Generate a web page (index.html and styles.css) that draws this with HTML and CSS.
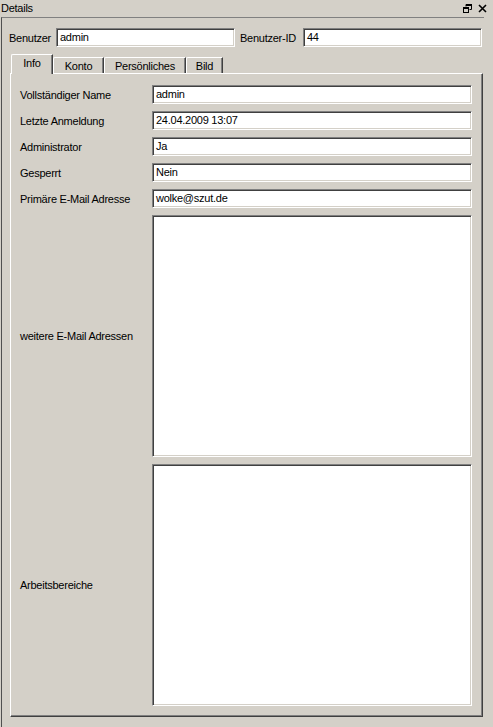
FILE: index.html
```html
<!DOCTYPE html>
<html>
<head>
<meta charset="utf-8">
<link rel="stylesheet" href="styles.css">
</head>
<body>
<div class="titlebar">
  <span class="title">Details</span>
  <span class="icons">
    <svg class="ico" width="9" height="9" viewBox="0 0 9 9">
      <path d="M3 0.5H8.5V5.5H6.5M3 0.5V2.5" fill="none" stroke="#000" stroke-width="1"/>
      <rect x="3" y="0" width="6" height="2" fill="#000"/>
      <rect x="0.5" y="3.5" width="5" height="5" fill="none" stroke="#000" stroke-width="1"/>
      <rect x="0" y="3" width="6" height="2" fill="#000"/>
    </svg>
    <svg class="ico" width="9" height="9" viewBox="0 0 9 9">
      <path d="M1 1L8 8M8 1L1 8" stroke="#000" stroke-width="1.6"/>
    </svg>
  </span>
</div>
<div class="frame">
  <div class="head">
    <span class="lbl">Benutzer</span>
    <div class="field">admin</div>
    <span class="lbl lbl2">Benutzer-ID</span>
    <div class="field">44</div>
  </div>
  <div class="tabs">
    <div class="tab active t1">Info</div>
    <div class="tab t2">Konto</div>
    <div class="tab t3">Persönliches</div>
    <div class="tab t4">Bild</div>
  </div>
  <div class="panel">
    <span class="plbl">Vollständiger Name</span><div class="field">admin</div>
    <span class="plbl">Letzte Anmeldung</span><div class="field">24.04.2009 13:07</div>
    <span class="plbl">Administrator</span><div class="field">Ja</div>
    <span class="plbl">Gesperrt</span><div class="field">Nein</div>
    <span class="plbl">Primäre E-Mail Adresse</span><div class="field">wolke@szut.de</div>
    <span class="plbl">weitere E-Mail Adressen</span><div class="field area"></div>
    <span class="plbl">Arbeitsbereiche</span><div class="field area"></div>
  </div>
</div>
</body>
</html>
```

FILE: styles.css
```css
html, body {
  margin: 0;
  padding: 0;
  background: #d4d0c8;
}
body {
  width: 493px;
  height: 727px;
  overflow: hidden;
  font-family: "Liberation Sans", Arial, sans-serif;
  font-size: 11px;
  letter-spacing: -0.25px;
  color: #000;
}
.titlebar {
  height: 17px;
  display: flex;
  align-items: center;
  justify-content: space-between;
  padding: 0 6px 0 1px;
}
.title {
  line-height: 17px;
}
.icons {
  display: flex;
  gap: 6px;
  padding-bottom: 1px;
}
.ico {
  display: block;
}
.frame {
  width: 482px;
  height: 709px;
  margin-left: 1px;
  border-top: 1px solid #808080;
  border-left: 1px solid #505050;
}
.head {
  display: grid;
  grid-template-columns: 47px 179px 68px 179px;
  align-items: center;
  padding: 10px 0 0 7px;
}
.lbl2 {
  padding-left: 5px;
}
.field {
  box-sizing: border-box;
  height: 19px;
  background: #fff;
  border-top: 1px solid #808080;
  border-left: 1px solid #808080;
  border-right: 1px solid #fff;
  border-bottom: 1px solid #fff;
  box-shadow: inset 1px 1px 0 #404040, inset -1px -1px 0 #d4d0c8;
  padding: 0 3px;
  line-height: 17px;
  white-space: nowrap;
  overflow: hidden;
}
.tabs {
  display: flex;
  align-items: flex-end;
  height: 19px;
  margin-top: 7px;
  padding-left: 9px;
  position: relative;
  z-index: 1;
}
.tab {
  box-sizing: border-box;
  height: 16px;
  border-top: 1px solid #fff;
  border-left: 1px solid #fff;
  border-right: 1px solid #404040;
  box-shadow: inset -1px 0 0 #808080;
  border-top-left-radius: 2px;
  text-align: center;
  line-height: 16px;
}
.tab.active {
  height: 20px;
  margin-bottom: -1px;
  background: #d4d0c8;
  line-height: 17px;
}
.t1 { width: 42px; }
.t2 { width: 51px; }
.t3 { width: 82px; }
.t4 { width: 37px; }
.panel {
  box-sizing: border-box;
  width: 473px;
  height: 644px;
  margin-left: 8px;
  border-top: 1px solid #fff;
  border-left: 1px solid #fff;
  border-right: 1px solid #404040;
  border-bottom: 1px solid #404040;
  box-shadow: inset -1px -1px 0 #808080;
  padding: 11px 10px 10px 9px;
  display: grid;
  grid-template-columns: 132px 320px;
  grid-template-rows: 19px 19px 19px 19px 19px 242px 242px;
  row-gap: 7px;
  align-items: center;
}
.field.area {
  height: 242px;
}
```
